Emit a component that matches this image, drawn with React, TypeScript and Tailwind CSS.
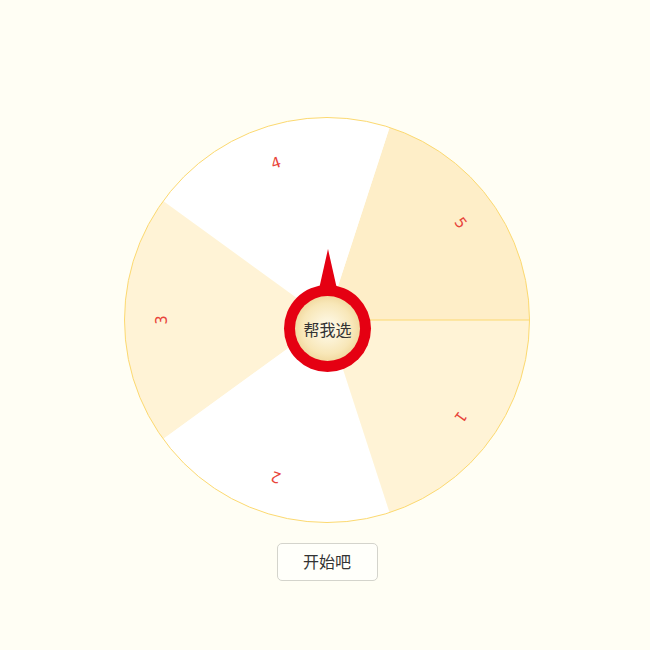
import React from "react";

const R = 202.5;
const C = 203;

function pt(a: number, r: number) {
  const rad = (a * Math.PI) / 180;
  return [C + r * Math.cos(rad), C - r * Math.sin(rad)];
}

const sectors = [
  { label: "5", from: 0, to: 72, fill: "#feeec8" },
  { label: "4", from: 72, to: 144, fill: "#ffffff" },
  { label: "3", from: 144, to: 216, fill: "#fff3d6" },
  { label: "2", from: 216, to: 288, fill: "#ffffff" },
  { label: "1", from: 288, to: 360, fill: "#fff3d6" },
];

function Wheel() {
  return (
    <svg width={406} height={406} viewBox="0 0 406 406" className="block">
      {sectors.map((s) => {
        const [x1, y1] = pt(s.from, R);
        const [x2, y2] = pt(s.to, R);
        const d = `M ${C} ${C} L ${x1} ${y1} A ${R} ${R} 0 0 0 ${x2} ${y2} Z`;
        return <path key={s.label} d={d} fill={s.fill} />;
      })}
      <line x1={C} y1={C} x2={C + R} y2={C} stroke="#fcd970" strokeWidth={1} />
      <circle cx={C} cy={C} r={R} fill="none" stroke="#fcd970" strokeWidth={1} />
      {sectors.map((s) => {
        const mid = (s.from + s.to) / 2;
        const [x, y] = pt(mid, 165);
        return (
          <text
            key={"t" + s.label}
            x={x}
            y={y}
            fill="#e8443a"
            fontSize={15}
            fontFamily="'DejaVu Sans', sans-serif"
            textAnchor="middle"
            dominantBaseline="central"
            transform={`rotate(${90 - mid} ${x} ${y})`}
          >
            {s.label}
          </text>
        );
      })}
    </svg>
  );
}

export default function App() {
  return (
    <div className="w-[650px] h-[650px] bg-[#fffef4] flex flex-col items-center pt-[117px] font-['Noto_Sans_CJK_SC',sans-serif]">
      <div className="relative w-[406px] h-[406px] ml-[4px]">
        <Wheel />
        <div className="absolute left-[160px] top-[132px] w-[87px] h-[122px]">
          <svg width={87} height={122} viewBox="0 0 87 122" className="absolute left-0 top-0">
            <path d="M44 0 L53 40 L35 40 Z" fill="#e50012" />
          </svg>
          <div className="absolute left-0 top-[36px] w-[87px] h-[87px] rounded-full bg-[#e50012] flex items-center justify-center">
            <div className="w-[65px] h-[65px] rounded-full bg-[radial-gradient(circle,#fffcef_0%,#f8e7b8_55%,#e6c277_100%)] flex items-center justify-center">
              <span className="text-[16px] leading-none text-[#333]">帮我选</span>
            </div>
          </div>
        </div>
      </div>
      <button className="mt-[20px] w-[101px] h-[38px] rounded-[5px] border border-[#d4d4cc] bg-[#fffffa] text-[16px] leading-none pb-[2px] text-[#333] ml-[4px]">
        开始吧
      </button>
    </div>
  );
}
